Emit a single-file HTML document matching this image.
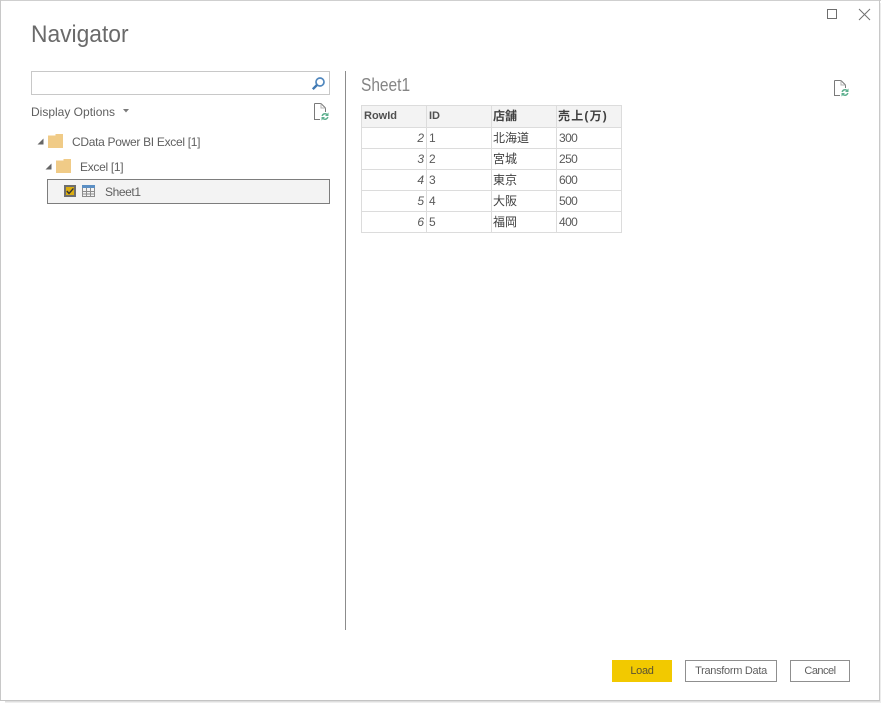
<!DOCTYPE html>
<html>
<head>
<meta charset="utf-8">
<style>
html,body{margin:0;padding:0;background:#fff;}
body{width:881px;height:705px;position:relative;overflow:hidden;font-family:"Liberation Sans","Noto Sans CJK JP",sans-serif;font-size:12px;color:#5a5a5a;}
.a{position:absolute;white-space:nowrap;}
.c{position:absolute;box-sizing:border-box;height:21px;line-height:21px;white-space:nowrap;}
.n{font-size:12px;letter-spacing:-.6px;}
.r{font-size:12px;font-style:italic;width:62px;left:362px;text-align:right;}
.j{left:493px;color:#404040;}
.l{left:429px;}
.v{left:559px;}
</style>
</head>
<body>
<!-- window frame -->
<div class="a" style="left:0;top:0;width:881px;height:1px;background:#cfcfcf"></div>
<div class="a" style="left:0;top:0;width:1px;height:700px;background:#c8c8c8"></div>
<div class="a" style="left:879px;top:0;width:1px;height:700px;background:#c8c8c8"></div>
<div class="a" style="left:880px;top:3px;width:1px;height:700px;background:#ececec"></div>
<div class="a" style="left:0;top:700px;width:880px;height:1px;background:#c4c4c4"></div>
<div class="a" style="left:5px;top:701px;width:875px;height:1px;background:#dedede"></div>
<div class="a" style="left:5px;top:702px;width:875px;height:1px;background:#eeeeee"></div>

<!-- window controls -->
<div class="a" style="left:827px;top:9px;width:10px;height:10px;box-sizing:border-box;border:1px solid #6e6e6e"></div>
<svg class="a" style="left:858px;top:8px" width="13" height="13" viewBox="0 0 13 13"><path d="M1 1L12 12M12 1L1 12" stroke="#707070" stroke-width="1" fill="none"/></svg>

<!-- title -->
<div class="a" style="left:31px;top:20px;font-size:24px;line-height:30px;color:#6a6a6a;transform:scaleX(.95);transform-origin:0 0">Navigator</div>

<!-- search -->
<div class="a" style="left:31px;top:71px;width:299px;height:24px;box-sizing:border-box;border:1px solid #c8c8c8"></div>
<svg class="a" style="left:311px;top:76px" width="15" height="15" viewBox="0 0 15 15"><circle cx="9" cy="6" r="4" stroke="#4f86bd" stroke-width="1.7" fill="none"/><path d="M6 9L1.8 13.2" stroke="#3f78b2" stroke-width="2.4" fill="none"/></svg>

<!-- display options -->
<div class="a" style="left:31px;top:104px;line-height:16px;color:#5f5f5f">Display Options</div>
<svg class="a" style="left:123px;top:109px" width="6" height="4" viewBox="0 0 6 4"><path d="M0 0H6L3 3.5Z" fill="#7a7a7a"/></svg>

<!-- refresh icon left -->
<svg class="a" style="left:313px;top:103px" width="16" height="18" viewBox="0 0 16 18"><path d="M1.5 .5H8L12.5 5V9M1.5 .5V16.5H7" stroke="#7a7a7a" fill="none"/><path d="M8 .5V5H12.5" stroke="#b0b0b0" fill="none"/><path d="M9.2 13A3 3 0 0 1 14 11.4M14.8 14A3 3 0 0 1 10 15.6" stroke="#5eb08f" stroke-width="1.5" fill="none"/><path d="M15.5 9.5V13H12Z M8.5 17.5V14H12Z" fill="#5eb08f"/></svg>

<!-- tree -->
<svg class="a" style="left:37px;top:138px" width="7" height="7" viewBox="0 0 7 7"><path d="M6.5 .5V6.5H.5Z" fill="#666"/></svg>
<svg class="a" style="left:48px;top:134px" width="15" height="14" viewBox="0 0 15 14"><path d="M0 1.5H7.5V0H15V14H0Z" fill="#f0cb87"/></svg>
<div class="a" style="left:72px;top:134px;line-height:16px;color:#5f5f5f;letter-spacing:-.3px">CData Power BI Excel [1]</div>

<svg class="a" style="left:45px;top:163px" width="7" height="7" viewBox="0 0 7 7"><path d="M6.5 .5V6.5H.5Z" fill="#666"/></svg>
<svg class="a" style="left:56px;top:159px" width="15" height="14" viewBox="0 0 15 14"><path d="M0 1.5H7.5V0H15V14H0Z" fill="#f0cb87"/></svg>
<div class="a" style="left:80px;top:159px;line-height:16px;color:#5f5f5f;letter-spacing:-.3px">Excel [1]</div>

<div class="a" style="left:47px;top:179px;width:283px;height:25px;box-sizing:border-box;border:1px solid #7d7d7d;background:#f3f3f3"></div>
<svg class="a" style="left:64px;top:185px" width="12" height="12" viewBox="0 0 12 12"><rect width="12" height="12" fill="#6e6e6e"/><rect x="2" y="2" width="8" height="8" fill="#dcae10"/><path d="M2.8 6L5 8.4L9.4 3.4" stroke="#333" stroke-width="1.4" fill="none"/></svg>
<svg class="a" style="left:82px;top:185px" width="13" height="12" viewBox="0 0 13 12"><rect x="0" y="0" width="13" height="3" fill="#5b8fc4"/><path d="M.5 3V11.5H12.5V3M.5 6.5H12.5M.5 9H12.5M4.5 3V11.5M8.5 3V11.5" stroke="#8c8c8c" fill="none"/></svg>
<div class="a" style="left:105px;top:184px;line-height:16px;color:#5f5f5f;letter-spacing:-.4px">Sheet1</div>

<!-- divider -->
<div class="a" style="left:345px;top:71px;width:1px;height:559px;background:#8c8c8c"></div>

<!-- preview -->
<div class="a" style="left:361px;top:74px;font-size:18px;line-height:22px;color:#858585;transform:scaleX(.86);transform-origin:0 0">Sheet1</div>
<svg class="a" style="left:833px;top:80px" width="16" height="17" viewBox="0 0 16 17"><path d="M1.5 .5H8L12.5 5V8M1.5 .5V15.5H7" stroke="#7a7a7a" fill="none"/><path d="M8 .5V5H12.5" stroke="#b0b0b0" fill="none"/><path d="M9.2 12A3 3 0 0 1 14 10.4M14.8 13A3 3 0 0 1 10 14.6" stroke="#5eb08f" stroke-width="1.5" fill="none"/><path d="M15.5 8.5V12H12Z M8.5 16.5V13H12Z" fill="#5eb08f"/></svg>

<!-- table -->
<div class="a" style="left:362px;top:106px;width:259px;height:21px;background:#f3f3f3"></div>
<div class="a" style="left:361px;top:105px;width:261px;height:1px;background:#dcdcdc"></div>
<div class="a" style="left:361px;top:127px;width:261px;height:1px;background:#dcdcdc"></div>
<div class="a" style="left:361px;top:148px;width:261px;height:1px;background:#dcdcdc"></div>
<div class="a" style="left:361px;top:169px;width:261px;height:1px;background:#dcdcdc"></div>
<div class="a" style="left:361px;top:190px;width:261px;height:1px;background:#dcdcdc"></div>
<div class="a" style="left:361px;top:211px;width:261px;height:1px;background:#dcdcdc"></div>
<div class="a" style="left:361px;top:232px;width:261px;height:1px;background:#dcdcdc"></div>
<div class="a" style="left:361px;top:105px;width:1px;height:128px;background:#dcdcdc"></div>
<div class="a" style="left:426px;top:105px;width:1px;height:128px;background:#dcdcdc"></div>
<div class="a" style="left:491px;top:105px;width:1px;height:128px;background:#dcdcdc"></div>
<div class="a" style="left:556px;top:105px;width:1px;height:128px;background:#dcdcdc"></div>
<div class="a" style="left:621px;top:105px;width:1px;height:128px;background:#dcdcdc"></div>

<div class="c" style="left:364px;top:106px;font-size:11px;font-weight:bold;color:#505050">RowId</div>
<div class="c" style="left:429px;top:106px;font-size:11px;font-weight:bold;color:#505050">ID</div>
<div class="c" style="left:493px;top:106px;font-weight:bold;color:#404040">店舗</div>
<div class="c" style="left:558px;top:106px;font-weight:bold;color:#404040;letter-spacing:1.2px">売上(万)</div>

<div class="c r" style="top:128px">2</div>
<div class="c n l" style="top:128px">1</div>
<div class="c j" style="top:128px">北海道</div>
<div class="c n v" style="top:128px">300</div>

<div class="c r" style="top:149px">3</div>
<div class="c n l" style="top:149px">2</div>
<div class="c j" style="top:149px">宮城</div>
<div class="c n v" style="top:149px">250</div>

<div class="c r" style="top:170px">4</div>
<div class="c n l" style="top:170px">3</div>
<div class="c j" style="top:170px">東京</div>
<div class="c n v" style="top:170px">600</div>

<div class="c r" style="top:191px">5</div>
<div class="c n l" style="top:191px">4</div>
<div class="c j" style="top:191px">大阪</div>
<div class="c n v" style="top:191px">500</div>

<div class="c r" style="top:212px">6</div>
<div class="c n l" style="top:212px">5</div>
<div class="c j" style="top:212px">福岡</div>
<div class="c n v" style="top:212px">400</div>

<!-- buttons -->
<div class="a" style="left:612px;top:660px;width:60px;height:22px;background:#f2c900;text-align:center;line-height:22px;font-size:11px;color:#5a5232;letter-spacing:-.3px">Load</div>
<div class="a" style="left:685px;top:660px;width:92px;height:22px;box-sizing:border-box;border:1px solid #8f8f8f;text-align:center;line-height:20px;font-size:11px;color:#5f5f5f;letter-spacing:-.3px">Transform Data</div>
<div class="a" style="left:790px;top:660px;width:60px;height:22px;box-sizing:border-box;border:1px solid #8f8f8f;text-align:center;line-height:20px;font-size:11px;color:#5f5f5f;letter-spacing:-.5px">Cancel</div>
</body>
</html>
